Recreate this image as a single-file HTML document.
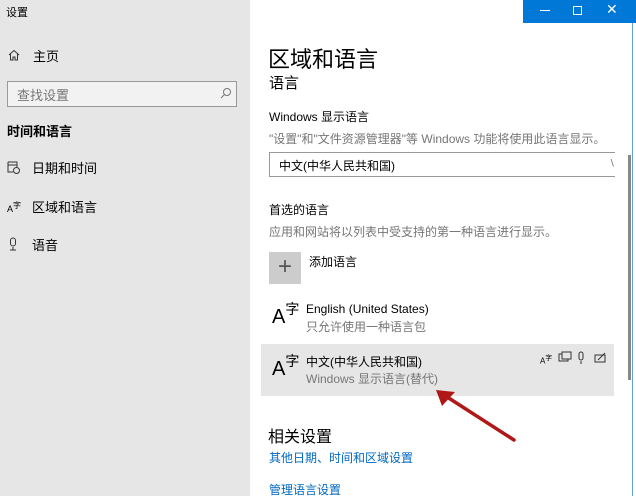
<!DOCTYPE html>
<html><head><meta charset="utf-8"><style>
*{margin:0;padding:0;box-sizing:border-box}
body{width:636px;height:496px;overflow:hidden;background:#fff;font-family:"Liberation Sans","Noto Sans CJK SC",sans-serif;color:#000;position:relative}
.a{position:absolute;white-space:nowrap}
#left{position:absolute;left:0;top:0;width:250px;height:496px;background:#e6e6e6}
.g{color:#767676}
.link{color:#0067c0}
</style></head><body>
<div id="left">
<div class="a" style="left:6px;top:4px;font-size:11px">设置</div>
<svg class="a" style="left:8px;top:49px" width="12" height="12" viewBox="0 0 12 12"><path d="M1 6 L6 1.5 L11 6 M2.5 5 V11 H5 V8 H7 V11 H9.5 V5" fill="none" stroke="#333" stroke-width="1"/></svg>
<div class="a" style="left:33px;top:46px;font-size:13px">主页</div>
<div class="a" style="left:7px;top:81px;width:230px;height:26px;border:1.5px solid #999;background:#f2f2f2"></div>
<div class="a g" style="left:17px;top:85px;font-size:13px">查找设置</div>
<svg class="a" style="left:220px;top:87px" width="12" height="12" viewBox="0 0 12 12"><circle cx="7" cy="5" r="3.5" fill="none" stroke="#777"/><path d="M4.5 7.5 L1 11" stroke="#777"/></svg>
<div class="a" style="left:7px;top:121px;font-size:13px;font-weight:bold">时间和语言</div>
<svg class="a" style="left:7px;top:160px" width="13" height="14" viewBox="0 0 13 14"><path d="M1 2 H10 V7 M1 2 V12 H6 M1 5 H10" fill="none" stroke="#333"/><circle cx="9.5" cy="10.5" r="3" fill="none" stroke="#333"/></svg>
<div class="a" style="left:32px;top:158px;font-size:13px">日期和时间</div>
<div class="a" style="left:7px;top:200px;font-size:9px">A<sup style="font-size:8px">字</sup></div>
<div class="a" style="left:32px;top:197px;font-size:13px">区域和语言</div>
<svg class="a" style="left:8px;top:237px" width="10" height="14" viewBox="0 0 10 14"><rect x="2.5" y="1" width="5" height="8" rx="2.5" fill="none" stroke="#333"/><path d="M5 10 V13 M2 13 H8" stroke="#333"/></svg>
<div class="a" style="left:32px;top:235px;font-size:13px">语音</div>
</div>
<div class="a" style="left:523px;top:0;width:113px;height:23px;background:#0078d7"></div>
<div class="a" style="left:540px;top:10px;width:10px;height:1px;background:#fff"></div>
<div class="a" style="left:573px;top:6px;width:9px;height:9px;border:1px solid #fff"></div>
<div class="a" style="left:606px;top:1px;color:#fff;font-size:14px">✕</div>
<div class="a" style="left:632px;top:23px;width:1px;height:473px;background:#6aa0d8"></div>
<div class="a" style="left:628px;top:155px;width:3px;height:225px;background:#888"></div>
<div class="a" style="left:268px;top:42px;font-size:22px">区域和语言</div>
<div class="a" style="left:269px;top:72px;font-size:15px">语言</div>
<div class="a" style="left:269px;top:108px;font-size:12px">Windows 显示语言</div>
<div class="a g" style="left:269px;top:130px;font-size:12px">"设置"和"文件资源管理器"等 Windows 功能将使用此语言显示。</div>
<div class="a" style="left:269px;top:152px;width:346px;height:25px;border:1.5px solid #999;border-right:none"></div>
<div class="a" style="left:279px;top:157px;font-size:12px">中文(中华人民共和国)</div>
<div class="a" style="left:609px;top:158px;font-size:9px;color:#666">∖</div>
<div class="a" style="left:269px;top:201px;font-size:12px">首选的语言</div>
<div class="a g" style="left:269px;top:223px;font-size:12px">应用和网站将以列表中受支持的第一种语言进行显示。</div>
<div class="a" style="left:269px;top:252px;width:32px;height:32px;background:#ccc;color:#555;font-size:24px;line-height:30px;text-align:center;font-weight:300">+</div>
<div class="a" style="left:309px;top:253px;font-size:12px">添加语言</div>
<div class="a" style="left:272px;top:306px;font-size:20px">A<span style="font-size:14px;position:relative;top:-9px">字</span></div>
<div class="a" style="left:306px;top:302px;font-size:12px">English (United States)</div>
<div class="a g" style="left:306px;top:318px;font-size:12px">只允许使用一种语言包</div>
<div class="a" style="left:261px;top:344px;width:353px;height:52px;background:#e6e6e6"></div>
<div class="a" style="left:272px;top:358px;font-size:20px">A<span style="font-size:14px;position:relative;top:-9px">字</span></div>
<div class="a" style="left:306px;top:353px;font-size:12px">中文(中华人民共和国)</div>
<div class="a g" style="left:306px;top:370px;font-size:12px">Windows 显示语言(替代)</div>
<div class="a" style="left:540px;top:352px;font-size:8px">A<sup>字</sup></div>
<svg class="a" style="left:558px;top:351px" width="70" height="14" viewBox="0 0 70 14"><rect x="1" y="3" width="9" height="7" fill="none" stroke="#333"/><rect x="4" y="1" width="9" height="7" fill="#e6e6e6" stroke="#333"/><rect x="21" y="1" width="4" height="8" rx="2" fill="none" stroke="#333"/><path d="M23 10 V13" stroke="#333"/><rect x="37" y="4" width="10" height="7" fill="none" stroke="#333"/><path d="M40 9 L47 2" stroke="#333"/></svg>
<svg class="a" style="left:430px;top:385px" width="90" height="60" viewBox="0 0 90 60"><path d="M84 55 L14 10" stroke="#b01818" stroke-width="3.5" stroke-linecap="round"/><path d="M6 5 L25 7 L12 21 Z" fill="#b01818"/></svg>
<div class="a" style="left:268px;top:423px;font-size:16px">相关设置</div>
<div class="a link" style="left:269px;top:449px;font-size:12px">其他日期、时间和区域设置</div>
<div class="a link" style="left:269px;top:481px;font-size:12px">管理语言设置</div>
</body></html>
